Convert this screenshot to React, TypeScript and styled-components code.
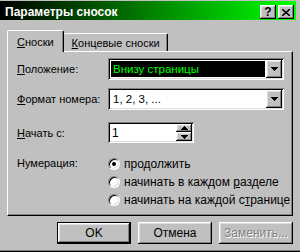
import React from 'react';
import styled, { createGlobalStyle } from 'styled-components';

const GlobalStyle = createGlobalStyle`
    html, body {
        margin: 0;
        padding: 0;
        background: #c0c0c0;
    }
    body {
        font-family: "Liberation Sans", Arial, sans-serif;
        font-size: 11px;
        color: #000;
    }
`;

const raised = `
    box-shadow: inset -1px -1px #000, inset 1px 1px #fff, inset -2px -2px #808080, inset 2px 2px #dfdfdf;
`;

const sunken = `
    box-shadow: inset 1px 1px #808080, inset -1px -1px #fff, inset 2px 2px #000, inset -2px -2px #dfdfdf;
`;

const Dialog = styled.div`
    width: 300px;
    height: 252px;
    box-sizing: border-box;
    background: #c0c0c0;
    display: flex;
    flex-direction: column;
    padding: 1px 4px 0 0;
    box-shadow: inset 0 -1px #000, inset 0 -2px #808080;
`;

const TitleBar = styled.div`
    height: 19px;
    display: flex;
    align-items: center;
    padding: 0 2px 0 5px;
    background: linear-gradient(to right, #000000, #00ff00);
    color: #fff;
`;

const Title = styled.span`
    flex: 1;
    font-weight: bold;
    font-size: 12px;
    padding-top: 2px;
`;

const CaptionButton = styled.div`
    width: 16px;
    height: 14px;
    margin-top: 3px;
    margin-left: 2px;
    background: #c0c0c0;
    color: #000;
    display: flex;
    align-items: center;
    justify-content: center;
    font-weight: bold;
    font-size: 12px;
    ${raised}

    &:first-of-type {
        margin-left: 0;
    }
`;

const Body = styled.div`
    padding: 10px 0 0 7px;
    display: flex;
    flex-direction: column;
`;

const TabRow = styled.div`
    display: flex;
    align-items: flex-end;
    height: 21px;
`;

const Tab = styled.div<{ $active?: boolean }>`
    box-sizing: border-box;
    height: ${p => (p.$active ? 22 : 18)}px;
    padding: ${p => (p.$active ? '5px 9px 0 9px' : '3px 7px 0 8px')};
    background: #c0c0c0;
    border-top: 1px solid #fff;
    border-left: ${p => (p.$active ? '1px solid #fff' : 'none')};
    border-right: 1px solid #000;
    border-radius: 2px 2px 0 0;
    box-shadow: inset -1px 0 #808080;
    position: relative;
    z-index: ${p => (p.$active ? 1 : 0)};
    margin-bottom: ${p => (p.$active ? '-1px' : '0')};
`;

const Panel = styled.div`
    width: 286px;
    height: 165px;
    box-sizing: border-box;
    border-top: 1px solid #fff;
    border-left: 1px solid #fff;
    border-right: 1px solid #000;
    border-bottom: 1px solid #000;
    box-shadow: inset -1px -1px #808080;
    padding: 5px 0 0 9px;
    display: flex;
    flex-direction: column;
`;

const Row = styled.div<{ $gap: number; $height: number; $top?: boolean }>`
    display: flex;
    align-items: ${p => (p.$top ? 'flex-start' : 'center')};
    margin-top: ${p => p.$gap}px;
    height: ${p => p.$height}px;
`;

const Label = styled.div<{ $offset?: number }>`
    width: 91px;
    flex-shrink: 0;
    padding-top: ${p => p.$offset ?? 0}px;
`;

const U = styled.span`
    text-decoration: underline;
    text-underline-offset: 1px;
`;

const Combo = styled.div`
    width: 176px;
    height: 22px;
    box-sizing: border-box;
    background: #fff;
    padding: 2px;
    display: flex;
    ${sunken}
`;

const ComboText = styled.div<{ $selected?: boolean }>`
    flex: 1;
    margin: 1px;
    padding-left: 2px;
    display: flex;
    align-items: center;
    background: ${p => (p.$selected ? '#000' : 'transparent')};
    color: ${p => (p.$selected ? '#00ff00' : '#000')};
    outline: ${p => (p.$selected ? '1px dotted #fff' : 'none')};
    font-size: 11.5px;
`;

const ArrowButton = styled.div<{ $h: number }>`
    width: 16px;
    height: ${p => p.$h}px;
    background: #c0c0c0;
    display: flex;
    align-items: center;
    justify-content: center;
    ${raised}
`;

const Spin = styled.div`
    width: 86px;
    height: 21px;
    box-sizing: border-box;
    background: #fff;
    padding: 2px;
    display: flex;
    ${sunken}
`;

const SpinText = styled.div`
    flex: 1;
    padding-left: 2px;
    display: flex;
    align-items: center;
    font-size: 12px;
`;

const SpinButtons = styled.div`
    display: flex;
    flex-direction: column;
`;

const RadioGroup = styled.div`
    display: flex;
    flex-direction: column;
`;

const RadioRow = styled.div`
    display: flex;
    align-items: center;
    height: 18px;
    gap: 4px;
`;

const RadioCircle = styled.div<{ $checked?: boolean }>`
    width: 12px;
    height: 12px;
    box-sizing: border-box;
    border-radius: 50%;
    background: #fff;
    border-top: 1px solid #808080;
    border-left: 1px solid #808080;
    border-right: 1px solid #fff;
    border-bottom: 1px solid #fff;
    box-shadow: inset 1px 1px #000, inset -1px -1px #dfdfdf;
    display: flex;
    align-items: center;
    justify-content: center;

    &::after {
        content: '';
        width: 4px;
        height: 4px;
        border-radius: 50%;
        background: #000;
        display: ${p => (p.$checked ? 'block' : 'none')};
    }
`;

const RadioLabel = styled.span`
    font-size: 12px;
`;

const Footer = styled.div`
    display: flex;
    justify-content: flex-end;
    gap: 7px;
    margin-top: 6px;
    width: 286px;
`;

const Button = styled.div<{ $default?: boolean; $disabled?: boolean }>`
    width: 74px;
    height: 22px;
    box-sizing: border-box;
    display: flex;
    align-items: center;
    justify-content: center;
    background: #c0c0c0;
    font-size: 12px;
    color: ${p => (p.$disabled ? '#808080' : '#000')};
    text-shadow: ${p => (p.$disabled ? '1px 1px #fff' : 'none')};
    border: ${p => (p.$default ? '1px solid #000' : 'none')};
    ${raised}
`;

const Triangle = ({ up }: { up?: boolean }) => (
    <svg width="7" height="4" viewBox="0 0 7 4">
        <path d={up ? 'M3.5 0 L7 4 L0 4 Z' : 'M0 0 L7 0 L3.5 4 Z'} fill="#000" shapeRendering="crispEdges" />
    </svg>
);

const App: React.FC = () => {
    return (
        <>
            <GlobalStyle />
            <Dialog>
                <TitleBar>
                    <Title>Параметры сносок</Title>
                    <CaptionButton>?</CaptionButton>
                    <CaptionButton>
                        <svg width="8" height="7" viewBox="0 0 8 7">
                            <path d="M0 0 L8 7 M8 0 L0 7" stroke="#000" strokeWidth="1.6" />
                        </svg>
                    </CaptionButton>
                </TitleBar>
                <Body>
                    <TabRow>
                        <Tab $active>
                            <U>С</U>носки
                        </Tab>
                        <Tab>
                            <U>К</U>онцевые сноски
                        </Tab>
                    </TabRow>
                    <Panel>
                        <Row $gap={1} $height={22}>
                            <Label>
                                <U>П</U>оложение:
                            </Label>
                            <Combo>
                                <ComboText $selected>Внизу страницы</ComboText>
                                <ArrowButton $h={18}>
                                    <Triangle />
                                </ArrowButton>
                            </Combo>
                        </Row>
                        <Row $gap={8} $height={22}>
                            <Label>
                                <U>Ф</U>ормат номера:
                            </Label>
                            <Combo>
                                <ComboText>1, 2, 3, ...</ComboText>
                                <ArrowButton $h={18}>
                                    <Triangle />
                                </ArrowButton>
                            </Combo>
                        </Row>
                        <Row $gap={12} $height={21}>
                            <Label>
                                <U>Н</U>ачать с:
                            </Label>
                            <Spin>
                                <SpinText>1</SpinText>
                                <SpinButtons>
                                    <ArrowButton $h={8}>
                                        <Triangle up />
                                    </ArrowButton>
                                    <ArrowButton $h={9}>
                                        <Triangle />
                                    </ArrowButton>
                                </SpinButtons>
                            </Spin>
                        </Row>
                        <Row $gap={12} $height={54} $top>
                            <Label $offset={2}>Нумерация:</Label>
                            <RadioGroup>
                                <RadioRow>
                                    <RadioCircle $checked />
                                    <RadioLabel>продолжить</RadioLabel>
                                </RadioRow>
                                <RadioRow>
                                    <RadioCircle />
                                    <RadioLabel>
                                        начинать в каждом <U>р</U>азделе
                                    </RadioLabel>
                                </RadioRow>
                                <RadioRow>
                                    <RadioCircle />
                                    <RadioLabel>
                                        начинать на каждой с<U>т</U>ранице
                                    </RadioLabel>
                                </RadioRow>
                            </RadioGroup>
                        </Row>
                    </Panel>
                    <Footer>
                        <Button $default>OK</Button>
                        <Button>Отмена</Button>
                        <Button $disabled>Заменить...</Button>
                    </Footer>
                </Body>
            </Dialog>
        </>
    );
};

export default App;
